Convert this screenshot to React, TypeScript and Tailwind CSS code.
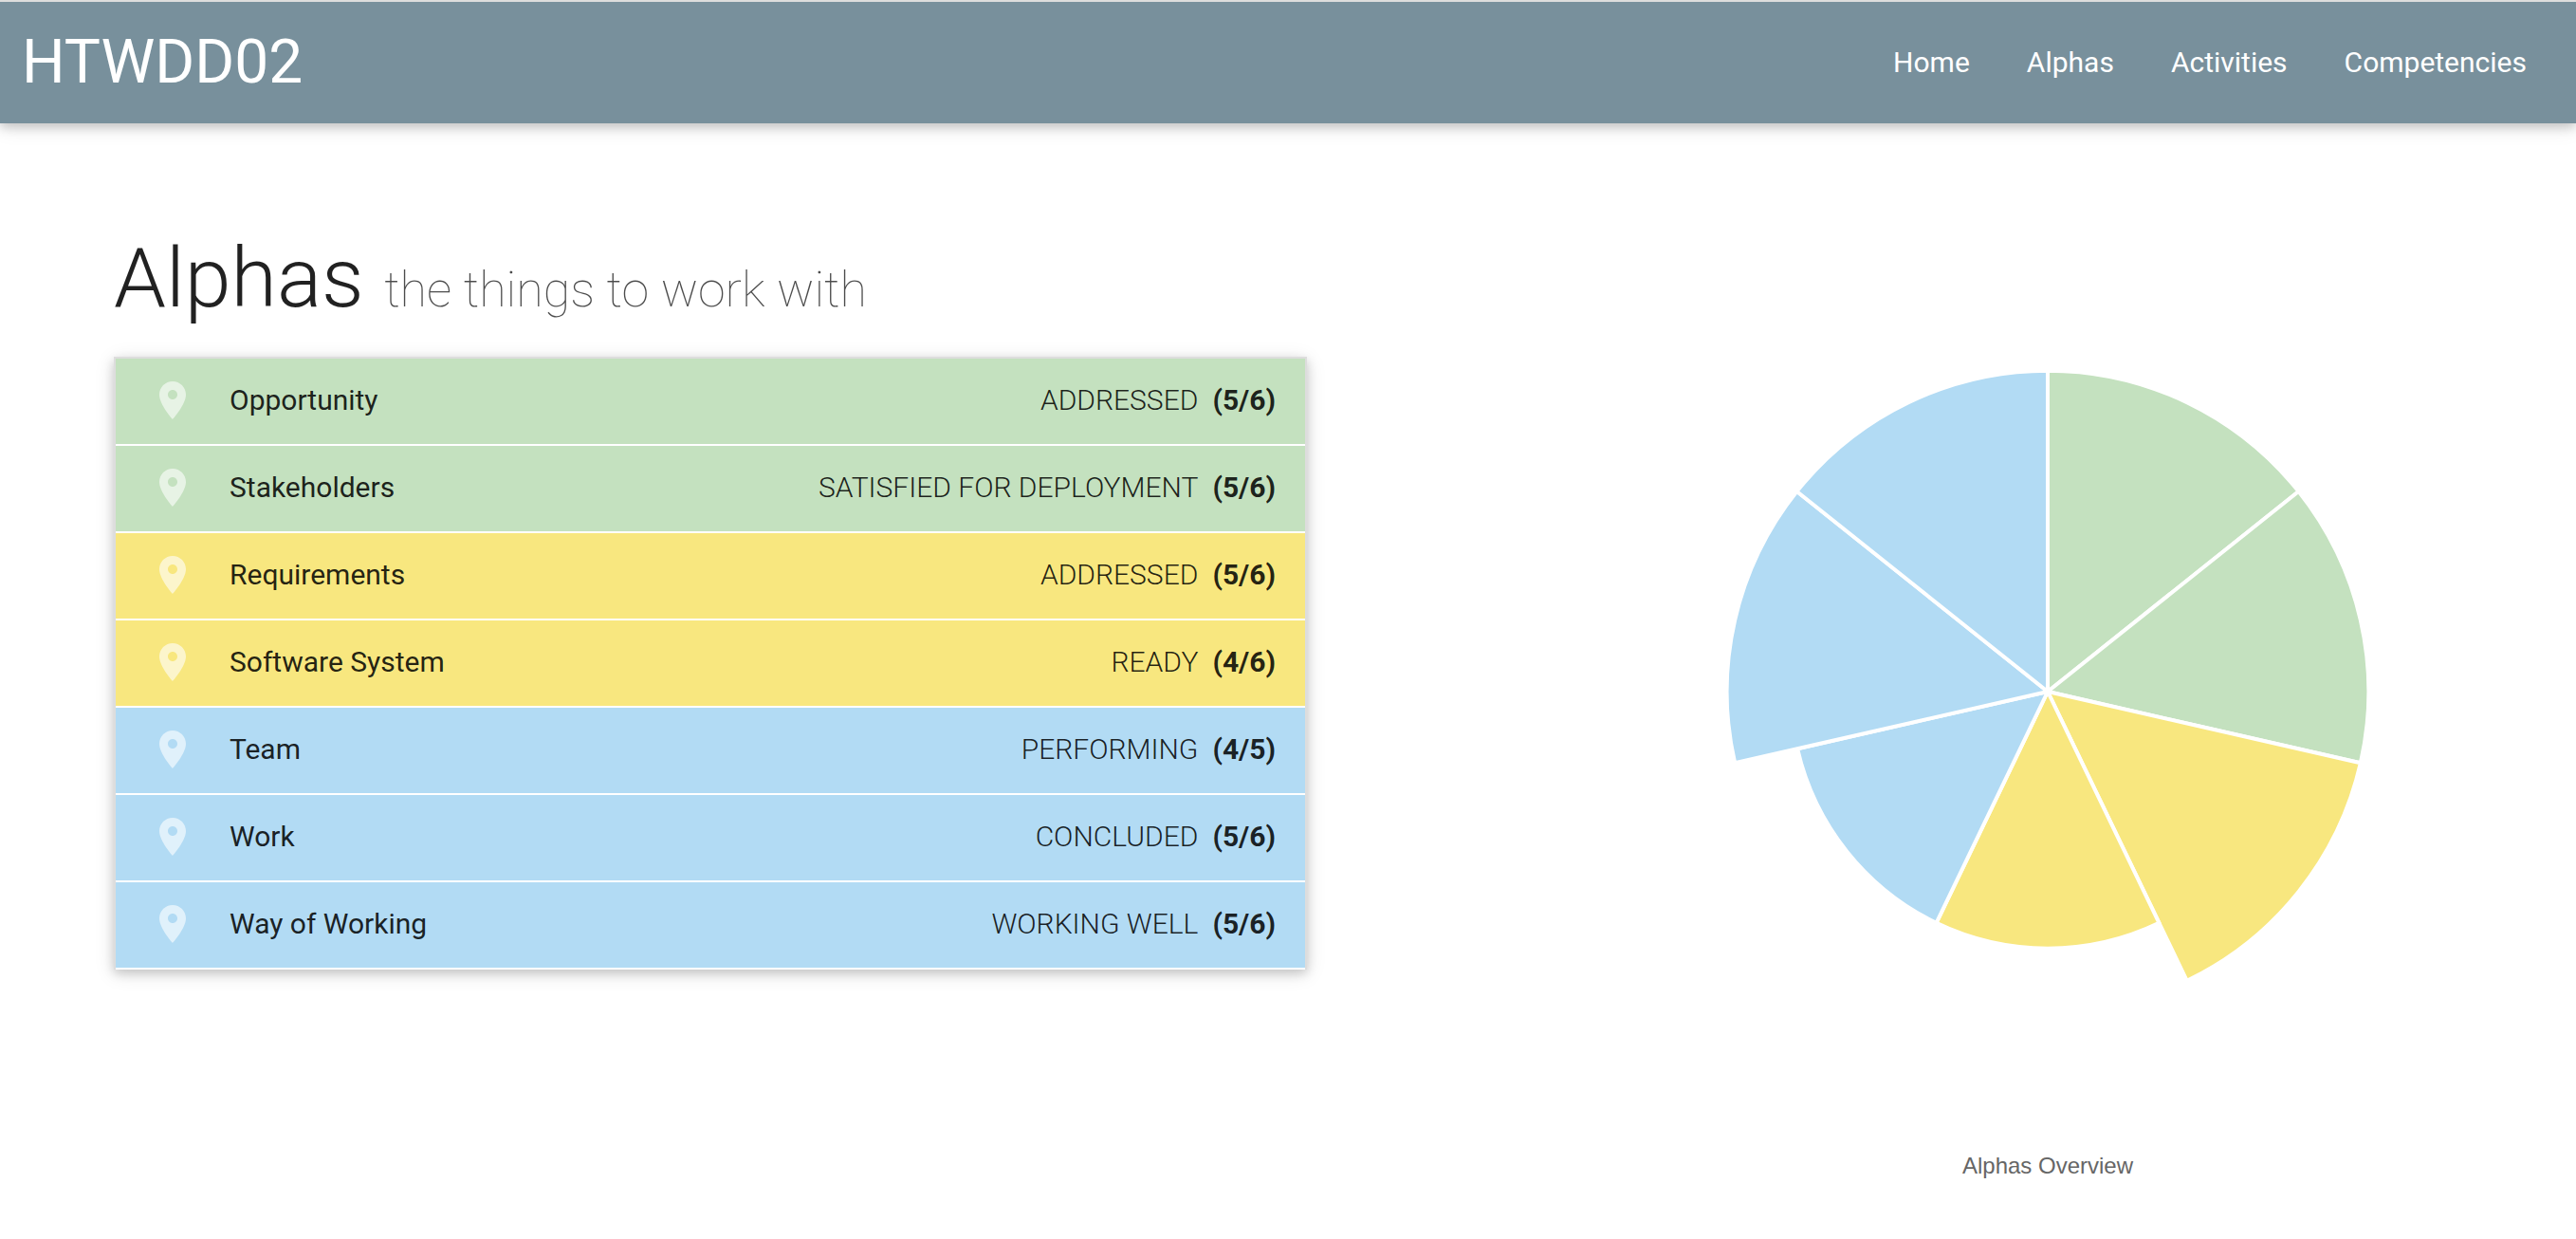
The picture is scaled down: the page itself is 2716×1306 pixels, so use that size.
import React from "react";

type Tone = "green" | "yellow" | "blue";

interface Alpha {
  name: string;
  state: string;
  reached: number;
  total: number;
  tone: Tone;
}

const alphas: Alpha[] = [
  { name: "Opportunity", state: "ADDRESSED", reached: 5, total: 6, tone: "green" },
  { name: "Stakeholders", state: "SATISFIED FOR DEPLOYMENT", reached: 5, total: 6, tone: "green" },
  { name: "Requirements", state: "ADDRESSED", reached: 5, total: 6, tone: "yellow" },
  { name: "Software System", state: "READY", reached: 4, total: 6, tone: "yellow" },
  { name: "Team", state: "PERFORMING", reached: 4, total: 5, tone: "blue" },
  { name: "Work", state: "CONCLUDED", reached: 5, total: 6, tone: "blue" },
  { name: "Way of Working", state: "WORKING WELL", reached: 5, total: 6, tone: "blue" },
];

const rowTone: Record<Tone, string> = {
  green: "bg-[#c4e1bf]",
  yellow: "bg-[#f8e77f]",
  blue: "bg-[#b2dbf4]",
};

const sliceTone: Record<Tone, string> = {
  green: "fill-[#c4e1bf]",
  yellow: "fill-[#f8e77f]",
  blue: "fill-[#b2dbf4]",
};

const links = ["Home", "Alphas", "Activities", "Competencies"];

function Header() {
  return (
    <header className="relative flex items-center justify-between border-t-2 border-[#dddddd] bg-[#78909c] pr-[22px] pl-[23px] leading-[128px] text-white shadow-[0_4px_10px_rgba(0,0,0,0.16),0_4px_20px_rgba(0,0,0,0.12)]">
      <a href="#home" className="text-[64px]">
        HTWDD02
      </a>
      <nav className="flex text-[30px]">
        {links.map((label) => (
          <a key={label} href={"#" + label.toLowerCase()} className="px-[30px]">
            {label}
          </a>
        ))}
      </nav>
    </header>
  );
}

function PlaceIcon() {
  return (
    <svg viewBox="0 0 24 24" className="size-12 fill-white/60" aria-hidden="true">
      <path d="M12 2C8.13 2 5 5.13 5 9c0 5.25 7 13 7 13s7-7.75 7-13c0-3.87-3.13-7-7-7zm0 9.5c-1.38 0-2.5-1.12-2.5-2.5s1.12-2.5 2.5-2.5 2.5 1.12 2.5 2.5-1.12 2.5-2.5 2.5z" />
    </svg>
  );
}

function AlphaList() {
  return (
    <ul className="border-x-2 border-t-2 border-[#dddddd] text-[30px] leading-[47px] shadow-[0_4px_10px_rgba(0,0,0,0.16),0_4px_20px_rgba(0,0,0,0.12)]">
      {alphas.map((alpha) => (
        <li
          key={alpha.name}
          className={"flex items-start border-b-2 border-white pt-5 pr-[31px] pb-[22px] pl-9 " + rowTone[alpha.tone]}
        >
          <PlaceIcon />
          <span className="ml-9">{alpha.name}</span>
          <span className="ml-auto font-light">{alpha.state}</span>
          <strong className="ml-[15px] font-bold">
            ({alpha.reached}/{alpha.total})
          </strong>
        </li>
      ))}
    </ul>
  );
}

const STEP = 203 / 3;

function slicePath(index: number, value: number) {
  const angle = (2 * Math.PI) / alphas.length;
  const r = value * STEP;
  const from = index * angle;
  const to = from + angle;
  return `M0 0L${r * Math.sin(from)} ${-r * Math.cos(from)}A${r} ${r} 0 0 1 ${r * Math.sin(to)} ${-r * Math.cos(to)}Z`;
}

function PolarChart() {
  return (
    <figure className="flex flex-col items-center pt-[193px]">
      <svg viewBox="-406 -406 812 812" className="w-[812px] max-w-full stroke-white stroke-4" role="img" aria-label="Alphas Overview">
        {alphas.map((alpha, i) => (
          <path key={alpha.name} d={slicePath(i, alpha.reached)} className={sliceTone[alpha.tone]} />
        ))}
      </svg>
      <figcaption className="mt-20 font-['Liberation_Sans',sans-serif] text-2xl leading-7 text-[#666666]">
        Alphas Overview
      </figcaption>
    </figure>
  );
}

export default function App() {
  return (
    <div className="min-h-screen bg-white font-['Roboto',sans-serif] text-black/87">
      <Header />
      <main className="grid grid-cols-[1258fr_874fr] gap-x-[344px] px-[120px]">
        <section className="pt-[115px]">
          <h1 className="mb-[35px] text-[88px] leading-24 font-light">
            Alphas <small className="text-[52px] leading-none font-thin text-black/70">the things to work with</small>
          </h1>
          <AlphaList />
        </section>
        <PolarChart />
      </main>
    </div>
  );
}
